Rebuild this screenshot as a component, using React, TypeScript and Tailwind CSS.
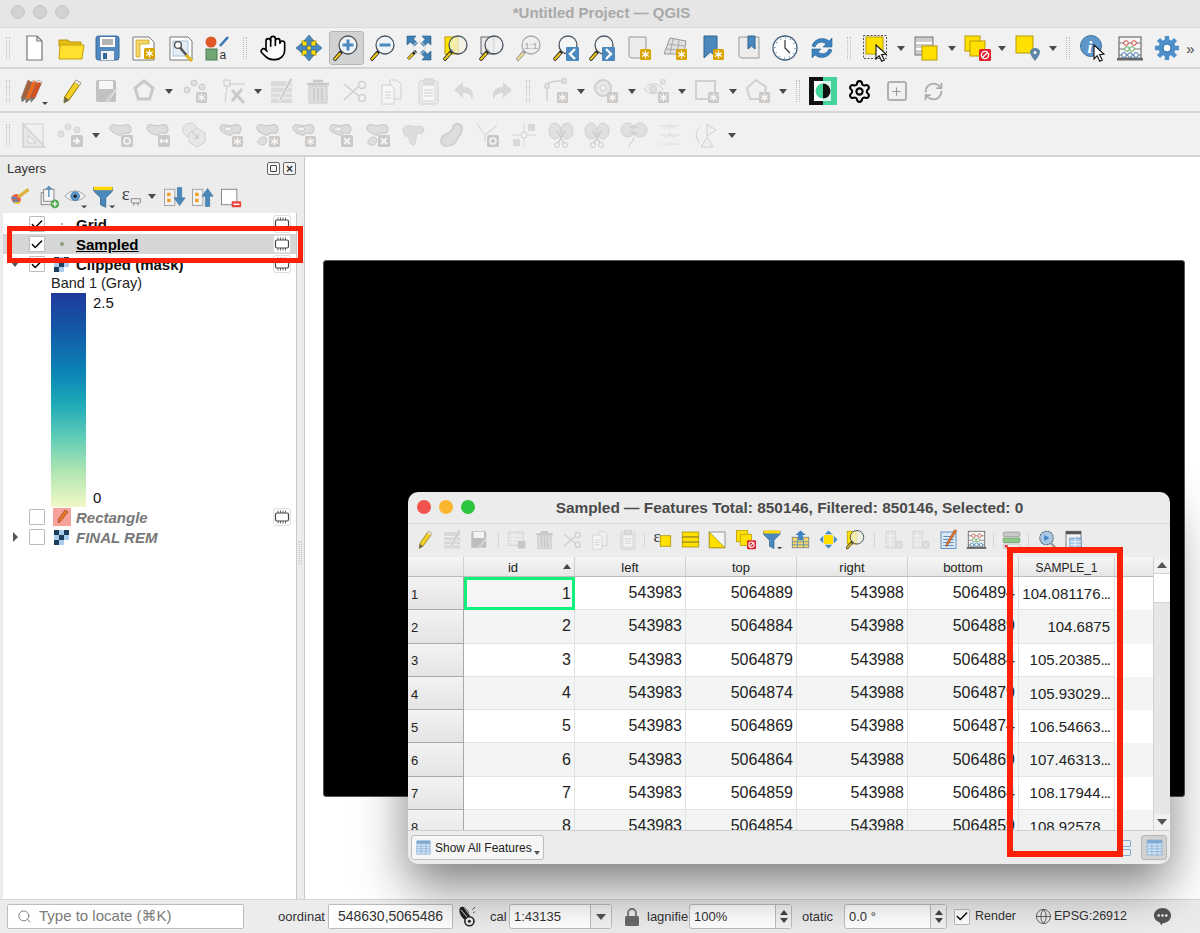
import type { ReactNode } from "react";
import { Hand, Search, Settings, RefreshCw, Check, Globe, Plus } from "lucide-react";

function Badge({ x = 15, y = 15, c = "#d9a300" }: { x?: number; y?: number; c?: string }) {
  const cx = x + 5.5;
  const cy = y + 5.5;
  return (
    <g>
      <rect x={x} y={y} width="11" height="11" rx="1.5" fill={c} />
      <path
        d={`M${cx} ${cy - 4}v8M${cx - 3.5} ${cy - 2}l7 4M${cx - 3.5} ${cy + 2}l7 -4`}
        stroke="#fff"
        strokeWidth="1.2"
      />
      <circle cx={cx} cy={cy} r="1.8" fill="#fff" />
    </g>
  );
}

function Mag({ cx = 16, cy = 11, fill = "#f4f6f6", children }: { cx?: number; cy?: number; fill?: string; children?: ReactNode }) {
  return (
    <g>
      <path d={`M${cx - 6} ${cy + 6}L${cx - 13} ${cy + 14}`} stroke="#222" strokeWidth="3.6" strokeLinecap="round" />
      <path d={`M${cx - 8} ${cy + 8.5}L${cx - 13} ${cy + 14}`} stroke="#f0c91a" strokeWidth="2" strokeLinecap="round" />
      <circle cx={cx} cy={cy} r="9" fill={fill} stroke="#4a5560" strokeWidth="1.3" />
      {children}
    </g>
  );
}

const blob = "M3 7c0-3 3-4 6-3s5 1 8 0 7 0 7 4-3 5-6 4-3 3-6 2-9-3-9-7z";

function Blob({ hole, badge, small }: { hole?: boolean; badge?: ReactNode; small?: boolean }) {
  return (
    <g>
      <path d={blob} fill="#c9c7c4" stroke="#999" strokeWidth="1.2" />
      {hole && <ellipse cx="11" cy="8" rx="4" ry="2.2" fill="#f2f2f2" stroke="#999" />}
      {small && <path d="M4 20c2-4 6-5 8-3s0 7-3 7-6-1-5-4z" fill="#c9c7c4" stroke="#999" />}
      {badge}
    </g>
  );
}

function GrayBox({ glyph }: { glyph: ReactNode }) {
  return (
    <g>
      <rect x="14" y="14" width="12" height="12" rx="1.5" fill="#9d9a96" />
      {glyph}
    </g>
  );
}

const cursor = <path d="M14 11l10 9-4.5.6 2.8 5.5-2.6 1.2-2.6-5.6L14 25z" fill="#fff" stroke="#111" strokeWidth="1.1" />;

const icons: Record<string, ReactNode> = {
  newDoc: <path d="M7 2h10l5 5v19H7zM17 2v5h5" fill="#fff" stroke="#777" strokeWidth="1.2" />,
  open: (
    <g>
      <path d="M2 6h9l2 2h11v4H2z" fill="#e5bd14" stroke="#b8960c" />
      <path d="M3 11h24l-2 14H2z" fill="#ffe02e" stroke="#c4a20e" />
    </g>
  ),
  save: (
    <g>
      <rect x="3" y="2" width="23" height="24" rx="2.5" fill="#5289bf" stroke="#33699c" />
      <rect x="7" y="3" width="15" height="10" fill="#fff" />
      <path d="M9 6h11M9 8h11M9 10h11" stroke="#666" />
      <rect x="8" y="17" width="13" height="9" fill="#f0f0f0" />
      <rect x="10" y="19" width="4" height="6" fill="#33699c" />
    </g>
  ),
  newLayout: (
    <g>
      <path d="M3 3h16l5 5v18H3z" fill="#fff" stroke="#777" />
      <path d="M6 6h13v4H10v13H6z" fill="#f3d56a" stroke="#c7a008" strokeWidth=".7" />
      <Badge x={14} y={14} />
    </g>
  ),
  layoutMgr: (
    <g>
      <path d="M3 3h18l4 4v19H3z" fill="#fff" stroke="#777" />
      <rect x="6" y="7" width="15" height="15" fill="#e4edf6" stroke="#a9c2da" />
      <path d="M10 9l5 7 7 8" stroke="#555" strokeWidth="2.6" />
      <path d="M19 21l6 6" stroke="#e0b92a" strokeWidth="3.4" />
      <circle cx="11" cy="11" r="3.4" fill="#fff" stroke="#555" strokeWidth="1.4" />
    </g>
  ),
  style: (
    <g>
      <circle cx="8" cy="8" r="5.5" fill="#e05a28" />
      <path d="M17 12L25 3" stroke="#3b76ad" strokeWidth="2.6" />
      <rect x="3" y="15" width="11" height="11" fill="#72a878" stroke="#4a7c50" />
      <text x="16.5" y="25" fontSize="12" fill="#333" fontFamily="Liberation Sans">a</text>
    </g>
  ),
  pan: (
    <g>
      <rect x="7" y="7" width="14" height="14" fill="#ffe000" stroke="#b79b00" />
      <path d="M14 1l5 6h-3v5h-4V7H9zM14 27l5-6h-3v-5h-4v5H9zM1 14l6-5v3h5v4H7v3zM27 14l-6-5v3h-5v4h5v3z" fill="#4a88bd" stroke="#2f658f" strokeWidth=".7" />
    </g>
  ),
  zoomIn: (
    <Mag fill="#f0f4f6">
      <path d="M16 5.5v11M10.500 11h11" stroke="#4a88bd" strokeWidth="3" />
    </Mag>
  ),
  zoomOut: (
    <Mag fill="#f0f4f6">
      <path d="M10.500 11h11" stroke="#4a88bd" strokeWidth="3" />
    </Mag>
  ),
  zoomFull: (
    <g>
      <path d="M2 2h9L8.500 5l4 4-3 3-4-4L2 11zM26 2v9l-3-2.500-4 4-3-3 4-4L17 2zM26 26h-9l2.500-3-4-4 3-3 4 4 3.500-3z" fill="#3e7fb4" stroke="#2a5d86" strokeWidth=".6" />
      <path d="M11 17L3 25" stroke="#222" strokeWidth="3" />
      <path d="M8 20L3 25" stroke="#f0c91a" strokeWidth="1.8" />
      <circle cx="14" cy="14" r="6" fill="none" stroke="#ddd" />
    </g>
  ),
  zoomSel: (
    <g>
      <rect x="3" y="3" width="13" height="17" fill="#ffe000" stroke="#b79b00" />
      <Mag fill="rgba(240,240,225,.75)" />
    </g>
  ),
  zoomLayer: (
    <g>
      <rect x="3" y="3" width="13" height="17" fill="#e8e8e8" stroke="#666" />
      <Mag fill="rgba(240,240,240,.75)" />
    </g>
  ),
  zoom11: (
    <Mag fill="#eee">
      <text x="9.500" y="14.500" fontSize="9" fill="#666" fontFamily="Liberation Sans" fontWeight="700">1:1</text>
    </Mag>
  ),
  zoomLast: (
    <g>
      <Mag />
      <rect x="14" y="13" width="13" height="14" rx="1" fill="#4a88bd" />
      <path d="M23 15l-5 5 5 5" fill="none" stroke="#fff" strokeWidth="2.4" />
    </g>
  ),
  zoomNext: (
    <g>
      <Mag />
      <rect x="14" y="13" width="13" height="14" rx="1" fill="#4a88bd" />
      <path d="M18 15l5 5-5 5" fill="none" stroke="#fff" strokeWidth="2.4" />
    </g>
  ),
  newMap: (
    <g>
      <path d="M4 3h17v21H8c-3 0-4-1-4-3z" fill="#ececec" stroke="#999" />
      <Badge />
    </g>
  ),
  map3d: (
    <g>
      <path d="M9 4l16 3-2 13-20 0z" fill="#e0e0e0" stroke="#999" />
      <path d="M6 10l18 2M4 15l19 1M12 5l-3 15M18 6l-2 14" stroke="#aaa" />
      <Badge />
    </g>
  ),
  bookmarkNew: (
    <g>
      <path d="M6 2h13v22l-6.500-6L6 24z" fill="#4a88bd" stroke="#2f658f" />
      <Badge />
    </g>
  ),
  bookmarks: (
    <g>
      <path d="M4 3h20v21H8c-3 0-4-1-4-3z" fill="#ececec" stroke="#999" />
      <path d="M13 2h7v13l-3.500-3L13 15z" fill="#4a88bd" stroke="#2f658f" />
    </g>
  ),
  clock: (
    <g>
      <circle cx="14" cy="14" r="12" fill="#fff" stroke="#45607a" strokeWidth="1.3" />
      <circle cx="14" cy="14" r="10" fill="none" stroke="#5d93c5" strokeWidth="1.4" strokeDasharray="1 4.2" />
      <path d="M14 6v8l5 5" fill="none" stroke="#333" strokeWidth="1.2" />
    </g>
  ),
  refresh: (
    <g>
      <path d="M4 12C6 5 15 2 21 7l3-3v9h-9l3-3C14 7 9 8 7 13z" fill="#3e83c1" stroke="#2a628f" strokeWidth=".6" />
      <path d="M24 16C22 23 13 26 7 21l-3 3v-9h9l-3 3c4 3 9 2 11-3z" fill="#3e83c1" stroke="#2a628f" strokeWidth=".6" />
    </g>
  ),
  select: (
    <g>
      <rect x="1.500" y="1.500" width="23" height="23" fill="#eee" stroke="#555" strokeDasharray="2 1.500" />
      <rect x="4" y="3" width="17" height="17" fill="#ffe000" stroke="#b79b00" />
      {cursor}
    </g>
  ),
  attrSelect: (
    <g>
      <rect x="3" y="3" width="18" height="18" fill="#ccc" stroke="#777" />
      <path d="M4 9h16M4 15h16" stroke="#fff" strokeWidth="2" />
      <rect x="10" y="12" width="15" height="14" fill="#ffe000" stroke="#b79b00" />
    </g>
  ),
  deselect: (
    <g>
      <rect x="2" y="2" width="15" height="15" fill="#ffe000" stroke="#b79b00" />
      <rect x="7" y="7" width="15" height="15" fill="#ffe000" stroke="#b79b00" />
      <rect x="16" y="15" width="12" height="12" rx="1.500" fill="#e2202c" />
      <circle cx="22" cy="21" r="3.600" fill="none" stroke="#fff" strokeWidth="1.400" />
      <path d="M19.500 23.500l5-5" stroke="#fff" strokeWidth="1.400" />
    </g>
  ),
  selectLoc: (
    <g>
      <rect x="2" y="2" width="17" height="17" fill="#ffe000" stroke="#b79b00" />
      <path d="M21 14c3 0 5 2 5 4 0 3-5 9-5 9s-5-6-5-9c0-2 2-4 5-4z" fill="#5f84a6" />
      <circle cx="21" cy="18.500" r="1.500" fill="#fff" />
    </g>
  ),
  identify: (
    <g>
      <circle cx="11" cy="12" r="10.500" fill="#5f97cb" stroke="#3f74a6" />
      <text x="7.500" y="19" fontSize="17" fontStyle="italic" fontWeight="700" fill="#fff" fontFamily="Liberation Serif">i</text>
      {cursor}
    </g>
  ),
  stats: (
    <g>
      <rect x="3" y="3" width="22" height="21" fill="#f6f6f6" stroke="#555" />
      <path d="M3 9h22M3 15h22M3 21h22" stroke="#777" />
      <circle cx="10" cy="9" r="2.300" fill="#fff" stroke="#cf3a34" />
      <circle cx="18" cy="9" r="2.300" fill="#fff" stroke="#cf3a34" />
      <circle cx="11" cy="15" r="2.300" fill="#fff" stroke="#54a44c" />
      <circle cx="16" cy="15" r="2.300" fill="#fff" stroke="#54a44c" />
      <circle cx="8" cy="21" r="2.300" fill="#fff" stroke="#3b76ad" />
      <circle cx="14" cy="21" r="2.300" fill="#fff" stroke="#3b76ad" />
      <circle cx="20" cy="21" r="2.300" fill="#fff" stroke="#3b76ad" />
      <rect x="1" y="24" width="26" height="2.500" fill="#666" />
    </g>
  ),
  gearBlue: (
    <g>
      <path d="M14 2v24M2 14h24M5.500 5.500l17 17M22.500 5.500l-17 17" stroke="#4f8fc9" strokeWidth="4.500" />
      <circle cx="14" cy="14" r="8.500" fill="#4f8fc9" />
      <circle cx="14" cy="14" r="4" fill="#fff" stroke="#2f6da3" />
    </g>
  ),
  pencils: (
    <g>
      <path d="M8 3l4 2-6 16-4 4-.5-5z" fill="#a8623c" stroke="#666" strokeWidth=".5" />
      <path d="M13 3l4 2-7 17-4 4-.5-5z" fill="#ee6a1c" stroke="#666" strokeWidth=".5" />
      <path d="M18 3l4 2-7 16-4 4-.5-5z" fill="#d5501e" stroke="#666" strokeWidth=".5" />
      <path d="M1.500 20l4.500 1-4 4zM6 21.500l4.500.5-4 4zM10.500 20l4.500 1-4 4z" fill="#777" />
      <path d="M8 3l4 2 1-2 4 2 1-2 4 2-.6 1.400L19 5l-1 1-4-2-1 1-4-2z" fill="#e6e6e6" />
      <path d="M22 25h6l-3 3z" fill="#444" />
    </g>
  ),
  pencil: (
    <g>
      <path d="M19 3l5 3-12 17-5 3 .5-6z" fill="#f1cf25" stroke="#8f7a10" />
      <path d="M19 3l5 3-1.500 2.200-5-3z" fill="#eee" stroke="#999" strokeWidth=".5" />
      <path d="M8 20l4 3-5 3z" fill="#666" />
    </g>
  ),
  saveEdit: (
    <g>
      <rect x="3" y="3" width="20" height="22" rx="2" fill="#888" />
      <rect x="6" y="4" width="14" height="8" fill="#fff" />
      <path d="M25 10L15 25l-2 1 .5-3z" fill="#888" stroke="#ddd" />
    </g>
  ),
  poly: <path d="M14 4l9 7-3.500 11h-11L5 11z" fill="#f2f2f2" stroke="#999" strokeWidth="3" />,
  pointsBadge: (
    <g>
      <circle cx="6" cy="13" r="3" fill="#ccc" stroke="#999" />
      <circle cx="13" cy="6" r="3" fill="#ccc" stroke="#999" />
      <circle cx="21" cy="10" r="3" fill="#ccc" stroke="#999" />
      <Badge c="#a19a93" />
    </g>
  ),
  toolX: (
    <g>
      <path d="M4 3h6v6H4z" fill="none" stroke="#999" />
      <path d="M7 9L5 25M9 7l16 0" stroke="#999" />
      <path d="M12 13l12 13M22 12L12 24" stroke="#9d9a96" strokeWidth="3" />
    </g>
  ),
  tableEdit: (
    <g>
      <rect x="3" y="4" width="21" height="22" fill="#c2bfba" />
      <path d="M3 10h21M3 16h21M3 21h21" stroke="#fff" strokeWidth="1.200" />
      <path d="M25 2L14 22l-3 3 .5-4L22 1z" fill="#999" stroke="#eee" />
    </g>
  ),
  trash: (
    <g>
      <path d="M3 7h22M9 4h10" stroke="#999" strokeWidth="2.500" />
      <path d="M5 9h18v17H5z" fill="#c9c6c2" stroke="#999" />
      <path d="M10 11v13M14 11v13M18 11v13" stroke="#999" strokeWidth="1.500" />
    </g>
  ),
  scissors: (
    <g>
      <path d="M3 7l15 12M3 23L18 9" stroke="#aaa" strokeWidth="1.600" />
      <circle cx="21" cy="8" r="3.500" fill="none" stroke="#aaa" strokeWidth="1.500" />
      <circle cx="21" cy="21" r="3.500" fill="none" stroke="#aaa" strokeWidth="1.500" />
    </g>
  ),
  copy: (
    <g>
      <path d="M13 3h7l4 4v15H13z" fill="#f2f2f2" stroke="#aaa" />
      <path d="M5 8h9l3 3v16H5z" fill="#fff" stroke="#aaa" />
      <path d="M8 15h6M8 18h6M8 21h6" stroke="#aaa" />
    </g>
  ),
  paste: (
    <g>
      <rect x="5" y="4" width="19" height="23" rx="1.500" fill="#e4e4e4" stroke="#aaa" />
      <rect x="8" y="8" width="13" height="16" fill="#fff" stroke="#bbb" />
      <rect x="10" y="2" width="9" height="5" fill="#ccc" stroke="#aaa" />
      <path d="M10 13h9M10 16h9M10 19h9" stroke="#aaa" />
    </g>
  ),
  undo: <path d="M12 5L3 13l9 8v-5c6 0 8 2 9 7 3-8-1-13-9-13z" fill="#bdbab7" />,
  redo: <path d="M16 5l9 8-9 8v-5c-6 0-8 2-9 7-3-8 1-13 9-13z" fill="#bdbab7" />,
  node1: (
    <g>
      <path d="M5 24V9c0-4 5-5 16-5" fill="none" stroke="#aaa" strokeWidth="1.400" />
      <rect x="3" y="7" width="4" height="4" fill="#ddd" stroke="#999" />
      <rect x="20" y="2" width="4" height="4" fill="#ddd" stroke="#999" />
      <Badge c="#a19a93" />
    </g>
  ),
  ring: (
    <g>
      <circle cx="11" cy="11" r="8" fill="#ddd" stroke="#aaa" strokeWidth="2" />
      <circle cx="11" cy="11" r="3" fill="#f2f2f2" stroke="#aaa" />
      <Badge c="#a19a93" />
    </g>
  ),
  eye: (
    <g>
      <path d="M1 12c5-7 14-7 19 0-5 6-14 6-19 0z" fill="#eee" stroke="#aaa" />
      <circle cx="10" cy="12" r="3.500" fill="#ccc" stroke="#aaa" />
      <rect x="18" y="3" width="4" height="4" fill="#ddd" stroke="#aaa" />
      <Badge c="#a19a93" />
    </g>
  ),
  rectNode: (
    <g>
      <rect x="3" y="4" width="19" height="18" fill="none" stroke="#aaa" strokeWidth="2" />
      <Badge c="#a19a93" />
    </g>
  ),
  polyNode: (
    <g>
      <path d="M12 3l10 7-2 12H6L3 11z" fill="none" stroke="#aaa" strokeWidth="2" />
      <Badge c="#a19a93" />
    </g>
  ),
  plugin: (
    <g>
      <rect x="14" y="0" width="14" height="28" fill="#45d49b" />
      <rect x="0" y="0" width="14" height="28" fill="#111" />
      <rect x="5" y="4" width="9" height="20" fill="#fff" />
      <rect x="14" y="4" width="8" height="20" fill="#d9f6ea" />
      <path d="M14 6.500a7.500 7.500 0 0 0 0 15z" fill="#45d49b" />
      <path d="M14 6.500a7.500 7.500 0 0 1 0 15z" fill="#111" />
    </g>
  ),
  ruler: (
    <g>
      <path d="M3 3l22 23H3z" fill="#ddd" stroke="#aaa" strokeWidth="1.400" />
      <path d="M3 3h20v23" fill="none" stroke="#aaa" />
      <path d="M8 14l8 8H8z" fill="#f2f2f2" stroke="#aaa" />
    </g>
  ),
  pointsMove: (
    <g>
      <circle cx="4" cy="13" r="3" fill="#ccc" stroke="#aaa" />
      <circle cx="11" cy="6" r="3" fill="#ccc" stroke="#aaa" />
      <circle cx="20" cy="9" r="3" fill="#ccc" stroke="#aaa" />
      <GrayBox glyph={<path d="M16 20h6M19 17l3 3-3 3" stroke="#fff" strokeWidth="1.800" fill="none" />} />
    </g>
  ),
  shapeRot: <Blob badge={<GrayBox glyph={<circle cx="20" cy="20" r="3" fill="none" stroke="#fff" strokeWidth="1.500" />} />} />,
  shapeArrow: <Blob badge={<GrayBox glyph={<path d="M16 20h8M18 18l-2 2 2 2M22 18l2 2-2 2" fill="none" stroke="#fff" strokeWidth="1.300" />} />} />,
  hexArrow: (
    <g>
      <circle cx="9" cy="9" r="7" fill="#ddd" stroke="#aaa" />
      <path d="M16 7l8 5v9l-8 5-8-5v-9z" fill="#ddd" stroke="#aaa" />
      <path d="M10 10l7 7M17 13v4h-4" stroke="#888" fill="none" />
    </g>
  ),
  shapeHole: <Blob hole badge={<Badge c="#a19a93" />} />,
  shapePart: <Blob small badge={<Badge c="#a19a93" />} />,
  shapeHoleDel: <Blob hole badge={<GrayBox glyph={<path d="M17 17l6 6M23 17l-6 6" stroke="#fff" strokeWidth="1.800" />} />} />,
  shapePartDel: <Blob small badge={<GrayBox glyph={<path d="M17 17l6 6M23 17l-6 6" stroke="#fff" strokeWidth="1.800" />} />} />,
  shapeReshape: <path d="M3 9c0-4 5-5 9-4s9-1 11 2 0 6-5 5c-3 0-1 12-5 12s-3-9-6-9-4-3-4-6z" fill="#c9c7c4" stroke="#aaa" />,
  shapeOffset: <path d="M4 20C4 12 14 14 16 7s9-4 9 1-4 7-6 12-15 8-15 0z" fill="#c9c7c4" stroke="#aaa" strokeWidth="2" />,
  vertex: (
    <g>
      <path d="M4 3l8 11 12-10M12 14v7" fill="none" stroke="#bbb" strokeWidth="1.200" />
      <GrayBox glyph={<circle cx="20" cy="20" r="3" fill="none" stroke="#fff" strokeWidth="1.400" />} />
    </g>
  ),
  snap: (
    <g>
      <path d="M14 2v24M2 14h24" stroke="#bbb" />
      <circle cx="14" cy="14" r="3" fill="#eee" stroke="#aaa" />
      <rect x="18" y="3" width="7" height="7" fill="#bbb" />
      <rect x="3" y="18" width="7" height="7" fill="#bbb" />
    </g>
  ),
  cutShape: (
    <g>
      <ellipse cx="8" cy="10" rx="6" ry="8" fill="#ccc" stroke="#aaa" />
      <ellipse cx="20" cy="10" rx="6" ry="8" fill="#ccc" stroke="#aaa" />
      <path d="M10 10l7 12M18 10l-7 12" stroke="#999" strokeWidth="1.400" />
      <circle cx="10" cy="24" r="2.500" fill="none" stroke="#999" />
      <circle cx="18" cy="24" r="2.500" fill="none" stroke="#999" />
    </g>
  ),
  merge: (
    <g>
      <ellipse cx="8" cy="9" rx="7" ry="7" fill="#ccc" stroke="#aaa" />
      <ellipse cx="20" cy="9" rx="7" ry="7" fill="#ccc" stroke="#aaa" />
      <path d="M10 6h8M10 12h8M14 16c-1 5-5 7-5 10" stroke="#999" fill="none" />
    </g>
  ),
  lines3: <path d="M4 5h20M4 14h20M4 23h20M14 2v6M14 11v6M14 20v6M8 8c3-3 9-3 12 0M8 17c3-3 9-3 12 0" stroke="#ccc" fill="none" />,
  rotateFlag: (
    <g>
      <path d="M14 3v12l9-6zM14 16l6 10H8z" fill="#eee" stroke="#aaa" />
      <path d="M7 6c-5 5-5 11 0 16" fill="none" stroke="#aaa" />
    </g>
  ),
  brush: (
    <g>
      <path d="M4 14c3-5 8-4 10-1s1 8-2 9-9-3-8-8z" fill="#e8604b" />
      <path d="M4 16c2-2 5-1 6 1M6 20c2-2 5-2 6 0" stroke="#4a88bd" strokeWidth="2" fill="none" />
      <path d="M12 14L24 5" stroke="#e0b040" strokeWidth="4" />
      <path d="M8 20c2 1 4 2 6 0" stroke="#f1cf25" strokeWidth="2" fill="none" />
    </g>
  ),
  addGroup: (
    <g>
      <rect x="6" y="9" width="14" height="14" fill="#eee" stroke="#777" />
      <rect x="9" y="5" width="12" height="14" fill="#f6f6f6" stroke="#777" />
      <path d="M15 2v12M12 5l3-3 3 3" stroke="#4a88bd" strokeWidth="1.500" fill="none" />
      <circle cx="22" cy="22" r="5" fill="#50a850" />
      <path d="M22 19v6M19 22h6" stroke="#fff" strokeWidth="1.500" />
    </g>
  ),
  eyeBlue: (
    <g>
      <path d="M1 13c6-8 18-8 24 0-6 7-18 7-24 0z" fill="#eee" stroke="#999" />
      <circle cx="13" cy="13" r="5" fill="#5a9ad0" stroke="#3f74a6" />
      <circle cx="13" cy="13" r="2" fill="#222" />
      <path d="M20 24h7l-3.500 3z" fill="#444" />
    </g>
  ),
  filter: (
    <g>
      <path d="M2 3h22v4l-8 8v11l-6-3v-8L2 7z" fill="#4a88bd" stroke="#2f658f" />
      <rect x="2" y="2" width="22" height="4" fill="#ffd800" />
      <path d="M20 24h7l-3.500 3z" fill="#444" />
    </g>
  ),
  epsilonMem: (
    <g>
      <text x="2" y="17" fontSize="22" fill="#444" fontFamily="Liberation Serif">ε</text>
      <path d="M13 16h11v3a2 2 0 0 1-2 2H15a2 2 0 0 1-2-2z M16 21v3M21 21v3" fill="none" stroke="#777" />
    </g>
  ),
  expand: (
    <g>
      <rect x="3" y="5" width="12" height="19" fill="#f2f2f2" stroke="#999" />
      <rect x="6" y="9" width="4" height="4" fill="#f39c28" />
      <rect x="6" y="16" width="4" height="4" fill="#f39c28" />
      <path d="M18 3h5v12h4l-6.500 9L14 15h4z" fill="#4a88bd" stroke="#2f658f" strokeWidth=".6" />
    </g>
  ),
  collapse: (
    <g>
      <rect x="3" y="5" width="12" height="19" fill="#f2f2f2" stroke="#999" />
      <rect x="6" y="9" width="4" height="4" fill="#f39c28" />
      <rect x="6" y="16" width="4" height="4" fill="#f39c28" />
      <path d="M18 25h5V13h4l-6.500-9L14 13h4z" fill="#4a88bd" stroke="#2f658f" strokeWidth=".6" />
    </g>
  ),
  removeLayer: (
    <g>
      <rect x="4" y="5" width="18" height="18" fill="#fff" stroke="#777" />
      <rect x="16" y="19" width="11" height="7" rx="1" fill="#e8443c" />
      <path d="M18 22.500h7" stroke="#fff" strokeWidth="1.600" />
    </g>
  ),
  epsSelect: (
    <g>
      <rect x="11" y="9" width="14" height="14" fill="#ffe000" stroke="#a38b00" />
      <text x="2" y="17" fontSize="22" fill="#333" fontFamily="Liberation Serif">ε</text>
    </g>
  ),
  selectAll: (
    <g>
      <rect x="3" y="4" width="22" height="6" fill="#ffe000" stroke="#a38b00" />
      <rect x="3" y="11" width="22" height="6" fill="#ffe000" stroke="#a38b00" />
      <rect x="3" y="18" width="22" height="6" fill="#ffe000" stroke="#a38b00" />
    </g>
  ),
  invert: (
    <g>
      <rect x="3" y="4" width="21" height="21" fill="#f6f6f6" stroke="#777" />
      <path d="M3 4l21 21H3z" fill="#ffe000" stroke="#a38b00" />
    </g>
  ),
  moveTop: (
    <g>
      <rect x="3" y="11" width="22" height="14" fill="#f3d56a" stroke="#777" />
      <path d="M3 17h22M3 21h22M10 11v14M18 11v14" stroke="#4a88bd" />
      <path d="M11 15V8H7l7-6 7 6h-4v7z" fill="#3e83c1" />
    </g>
  ),
  panSel: (
    <g>
      <rect x="8" y="8" width="12" height="12" fill="#ffe000" />
      <path d="M14 2l5 5H9zM14 26l5-5H9zM2 14l5-5v10zM26 14l-5-5v10z" fill="#4a88bd" />
    </g>
  ),
  tableNew: (
    <g>
      <rect x="3" y="4" width="20" height="18" fill="#ddd" stroke="#aaa" />
      <path d="M3 9h20M3 14h20M3 18h20M10 4v18" stroke="#fff" />
      <rect x="16" y="16" width="10" height="10" fill="#a19a93" />
    </g>
  ),
  tableX: (
    <g>
      <rect x="4" y="3" width="13" height="22" fill="#ddd" stroke="#aaa" />
      <path d="M4 9h13M4 15h13M4 20h13M10 3v22" stroke="#fff" />
      <rect x="16" y="16" width="10" height="10" fill="#bbb" />
      <path d="M18 18l6 6M24 18l-6 6" stroke="#fff" />
    </g>
  ),
  fieldCalc: (
    <g>
      <rect x="4" y="4" width="20" height="22" fill="#dbe8f4" stroke="#3b76ad" />
      <path d="M7 10h14M7 14h14M7 18h14M7 22h14" stroke="#3b76ad" />
      <path d="M25 2L14 20l-3 4 .5-5L22 1z" fill="#e8742a" stroke="#7a3c14" strokeWidth=".6" />
    </g>
  ),
  conditional: (
    <g>
      <rect x="3" y="4" width="22" height="6" rx="1" fill="#c9c9c9" stroke="#999" />
      <rect x="3" y="12" width="22" height="6" rx="1" fill="#8ecb8a" stroke="#689a64" />
      <rect x="3" y="20" width="22" height="6" rx="1" fill="#eee" stroke="#bbb" />
      <path d="M5 23h4" stroke="#e2202c" strokeWidth="3" />
    </g>
  ),
  actions: (
    <g>
      <path d="M14 3a9 9 0 1 0 0 18 9 9 0 0 0 0-18z" fill="#a9c9e6" stroke="#5f6f7f" strokeWidth="1.500" strokeDasharray="3 1" />
      <path d="M11 8l7 4-7 4z" fill="#3e83c1" />
      <path d="M20 19l6 6" stroke="#999" strokeWidth="3" />
    </g>
  ),
  dockTable: (
    <g>
      <rect x="4" y="3" width="20" height="22" fill="#f3f3f3" stroke="#555" />
      <rect x="4" y="3" width="20" height="4" fill="#555" />
      <rect x="9" y="12" width="15" height="13" fill="#a9cbe8" stroke="#5f8fbb" />
      <path d="M9 17h15M9 21h15M16 12v13" stroke="#fff" />
    </g>
  ),
  table: (
    <g>
      <rect x="3" y="3" width="22" height="22" fill="#cfe2f3" stroke="#7eaad2" />
      <rect x="3" y="3" width="22" height="5" fill="#7eaad2" />
      <path d="M3 12h22M3 16h22M3 20h22M10 8v17M18 8v17" stroke="#7eaad2" />
    </g>
  ),
};

function Icon({ k, size = 28, className = "" }: { k: string; size?: number; className?: string }) {
  return (
    <svg viewBox="0 0 28 28" width={size} height={size} className={className}>
      {icons[k]}
    </svg>
  );
}

function T({ k, dim, active }: { k: string; dim?: boolean; active?: boolean }) {
  return (
    <div className="flex w-[36.6px] shrink-0 items-center justify-center">
      <div className={active ? "flex h-[34px] w-[35px] items-center justify-center rounded-[3px] border border-[#b6b6b6] bg-[#d2d2d2]" : "flex"}>
        <Icon k={k} className={dim ? "opacity-[.45]" : ""} />
      </div>
    </div>
  );
}

function A({ k, dim }: { k: string; dim?: boolean }) {
  return (
    <div className="flex w-[27.6px] shrink-0 items-center justify-center">
      <Icon k={k} size={21} className={dim ? "opacity-[.45]" : ""} />
    </div>
  );
}

function L({ k }: { k: string }) {
  return (
    <div className="flex w-[28px] shrink-0 items-center justify-center">
      <Icon k={k} size={24} />
    </div>
  );
}

function Dd({ className = "w-[14px]" }: { className?: string }) {
  return (
    <div className={`flex shrink-0 items-center justify-center ${className}`}>
      <div className="h-0 w-0 border-x-[4.5px] border-t-[5px] border-x-transparent border-t-[#4a4a4a]" />
    </div>
  );
}

function Grip({ className }: { className: string }) {
  return (
    <div className={`flex shrink-0 justify-center ${className}`}>
      <div className="h-[22px] w-[4px] border-x border-dotted border-[#bdbdbd]" />
    </div>
  );
}

function ASep({ className }: { className: string }) {
  return (
    <div className={`flex shrink-0 justify-center ${className}`}>
      <div className="h-[14px] w-px bg-[#d4d4d4]" />
    </div>
  );
}

function Memory() {
  return (
    <div className="ml-auto mr-[5px] flex h-[18px] w-[18px] items-center justify-center rounded-[3px] border border-[#dedede] bg-white">
      <svg viewBox="0 0 16 16" width="16" height="16">
        <rect x="1.500" y="4" width="13" height="8" rx="1.500" fill="none" stroke="#444" strokeWidth="1.200" />
        <path d="M4 1.500v2.500M6.500 1.500v2.500M9 1.500v2.500M11.500 1.500v2.500M4 12v2.500M6.500 12v2.500M9 12v2.500M11.500 12v2.500" stroke="#555" strokeWidth=".9" />
      </svg>
    </div>
  );
}

function Box({ checked }: { checked?: boolean }) {
  return (
    <div className="flex h-[16px] w-[16px] shrink-0 items-center justify-center rounded-[1px] border border-[#bcbcbc] bg-white">
      {checked && <Check size={15} strokeWidth={2.4} className="text-black" />}
    </div>
  );
}

function Raster() {
  return (
    <svg viewBox="0 0 3 3" width="15" height="15" shapeRendering="crispEdges">
      <path d="M1 0h1v1H1zM0 1h1v1H0zM2 1h1v1H2zM1 2h1v1H1z" fill="#a9cdec" />
      <path d="M0 0h1v1H0zM2 0h1v1H2zM1 1h1v1H1zM0 2h1v1H0z" fill="#1f3e5a" />
    </svg>
  );
}

function Row({ arrow, checked, symbol, name, nameClass, mem, rowClass = "" }: {
  arrow?: "down" | "right";
  checked?: boolean;
  symbol: ReactNode;
  name: string;
  nameClass: string;
  mem?: boolean;
  rowClass?: string;
}) {
  return (
    <div className={`flex h-[20px] items-center ${rowClass}`}>
      <div className="flex w-[26px] shrink-0 justify-center pr-[2px]">
        {arrow === "down" && <div className="h-0 w-0 border-x-[4px] border-t-[5px] border-x-transparent border-t-[#555]" />}
        {arrow === "right" && <div className="h-0 w-0 border-y-[5px] border-l-[5px] border-y-transparent border-l-[#555]" />}
      </div>
      <Box checked={checked} />
      <div className="flex w-[31px] shrink-0 justify-center pl-[2px]">{symbol}</div>
      <span className={`text-[15px] font-bold leading-none ${nameClass}`}>{name}</span>
      {mem && <Memory />}
    </div>
  );
}

function LayersPanel() {
  return (
    <div className="flex w-[294px] shrink-0 flex-col">
      <div className="flex h-[23px] shrink-0 items-center pl-[4px] pr-[1px] text-[13px] text-[#333]">
        <span>Layers</span>
        <div className="ml-auto flex gap-[3px]">
          <div className="flex h-[13px] w-[13px] items-center justify-center rounded-[2px] border border-[#666] bg-[#f4f4f4]">
            <div className="h-[7px] w-[7px] rounded-[1px] border border-[#444]" />
          </div>
          <div className="flex h-[13px] w-[13px] items-center justify-center rounded-[2px] border border-[#666] bg-[#f4f4f4] text-[12px] font-bold leading-none text-[#333]">×</div>
        </div>
      </div>
      <div className="flex h-[33px] shrink-0 items-center pl-[3px]">
        <L k="brush" />
        <L k="addGroup" />
        <L k="eyeBlue" />
        <L k="filter" />
        <L k="epsilonMem" />
        <Dd className="w-[11px]" />
        <div className="w-[3px] shrink-0" />
        <L k="expand" />
        <L k="collapse" />
        <L k="removeLayer" />
      </div>
      <div className="flex-1 border-r border-[#c9c9c9] bg-white pt-[1px]">
        <Row checked symbol={<div className="h-[2px] w-[2px] rounded-full bg-[#999]" />} name="Grid" nameClass="text-[#111]" mem />
        <Row checked symbol={<div className="h-[4px] w-[4px] rounded-full bg-[#8a9a80]" />} name="Sampled" nameClass="text-black underline" mem rowClass="bg-[#d6d6d6]" />
        <Row arrow="down" checked symbol={<Raster />} name="Clipped (mask)" nameClass="text-[#111]" mem />
        <div className="flex h-[19px] items-center pl-[48px] text-[14.5px] leading-none text-[#222]">Band 1 (Gray)</div>
        <div className="flex h-[214px] pl-[48px]">
          <div className="w-[35px] bg-[linear-gradient(180deg,#1f3a9c_0%,#125aa8_18%,#0b86b6_38%,#1eaab8_52%,#63cdb6_68%,#b2e6b2_84%,#f1f8c6_100%)]" />
          <div className="flex flex-col justify-between pl-[7px] pt-[1px] text-[15px] leading-[18px] text-[#111]">
            <span>2.5</span>
            <span>0</span>
          </div>
        </div>
        <Row
          symbol={
            <div className="flex h-[18px] w-[18px] items-center justify-center bg-[#f7a29a]">
              <svg viewBox="0 0 16 16" width="16" height="16">
                <path d="M11 1l3 2-7 9-3 2 .5-4z" fill="#e8742a" stroke="#8a4314" strokeWidth=".6" />
              </svg>
            </div>
          }
          name="Rectangle"
          nameClass="italic text-[#777]"
          mem
        />
        <Row arrow="right" symbol={<Raster />} name="FINAL REM" nameClass="italic text-[#777]" />
      </div>
    </div>
  );
}

const rows = [
  { id: 1, top: 5064889, bottom: "5064894", sample: "104.081176", cut: true },
  { id: 2, top: 5064884, bottom: "5064889", sample: "104.6875", cut: false },
  { id: 3, top: 5064879, bottom: "5064884", sample: "105.20385", cut: true },
  { id: 4, top: 5064874, bottom: "5064879", sample: "105.93029", cut: true },
  { id: 5, top: 5064869, bottom: "5064874", sample: "106.54663", cut: true },
  { id: 6, top: 5064864, bottom: "5064869", sample: "107.46313", cut: true },
  { id: 7, top: 5064859, bottom: "5064864", sample: "108.17944", cut: true },
  { id: 8, top: 5064854, bottom: "5064859", sample: "108.92578", cut: true },
];

const colClass = "grid grid-cols-[56px_111px_111px_111px_111px_111px_96px]";

function HeadCell({ children, sort }: { children?: ReactNode; sort?: boolean }) {
  return (
    <div className={`relative flex items-center justify-center border-r border-[#cfcfcf] pt-[2px] text-[13px] leading-none text-[#222] ${sort ? "pr-[12px]" : ""}`}>
      {children}
      {sort && <div className="absolute right-[3px] top-[7px] h-0 w-0 border-x-[4.5px] border-b-[5px] border-x-transparent border-b-[#444]" />}
    </div>
  );
}

function Cell({ children, focus }: { children: ReactNode; focus?: boolean }) {
  return (
    <div className={`flex items-center justify-end overflow-visible whitespace-nowrap text-[16px] leading-none text-[#222] ${focus ? "border-[3px] border-[#12f07c] bg-[#f3f6f4] pr-[1px]" : "border-b border-r border-[#e2e2e2] pr-[3px]"}`}>
      {children}
    </div>
  );
}

function AttributeWindow() {
  return (
    <div className="absolute left-[408px] top-[492px] flex h-[372px] w-[762px] flex-col overflow-hidden rounded-[10px] bg-[#ececec] shadow-[0_22px_50px_rgba(0,0,0,0.5)]">
      <div className="relative flex h-[32px] shrink-0 items-center justify-center border-b border-[#d8d8d8] text-[15.400px] font-bold text-[#4a4a4a]">
        <div className="absolute left-[9px] top-[8px] flex gap-[8px]">
          <div className="h-[14px] w-[14px] rounded-full bg-[#f0544c]" />
          <div className="h-[14px] w-[14px] rounded-full bg-[#fbb62e]" />
          <div className="h-[14px] w-[14px] rounded-full bg-[#2cc540]" />
        </div>
        <span className="pl-[1px]">Sampled — Features Total: 850146, Filtered: 850146, Selected: 0</span>
      </div>
      <div className="flex h-[33px] shrink-0 items-center pb-[2px] pl-[3px]">
        <A k="pencil" />
        <A k="tableEdit" dim />
        <A k="saveEdit" dim />
        <ASep className="w-[9.400px]" />
        <A k="tableNew" dim />
        <A k="trash" dim />
        <A k="scissors" dim />
        <A k="copy" dim />
        <A k="paste" dim />
        <ASep className="w-[7.600px]" />
        <A k="epsSelect" />
        <A k="selectAll" />
        <A k="invert" />
        <A k="deselect" />
        <A k="filter" />
        <A k="moveTop" />
        <A k="panSel" />
        <A k="zoomSel" />
        <ASep className="w-[10px]" />
        <A k="tableX" dim />
        <A k="tableX" dim />
        <A k="fieldCalc" />
        <A k="stats" />
        <ASep className="w-[7.600px]" />
        <A k="conditional" />
        <ASep className="w-[7.400px]" />
        <A k="actions" />
        <A k="dockTable" />
      </div>
      <div className="flex h-[274px] shrink-0 overflow-hidden border-b border-[#cfcfcf] bg-[#f1f1f1]">
        <div className="w-[745px] shrink-0 overflow-hidden">
          <div className={`${colClass} h-[20px] border-b border-[#bdbdbd] bg-[linear-gradient(180deg,#f6f6f6,#e6e6e6)]`}>
            <HeadCell />
            <HeadCell sort>id</HeadCell>
            <HeadCell>left</HeadCell>
            <HeadCell>top</HeadCell>
            <HeadCell>right</HeadCell>
            <HeadCell>bottom</HeadCell>
            <HeadCell><span className="text-[12px]">SAMPLE_1</span></HeadCell>
          </div>
          {rows.map((r, i) => (
            <div key={r.id} className={`${colClass} h-[33.300px] ${i % 2 === 0 ? "bg-white" : "bg-[#f3f5f4]"}`}>
              <div className="flex items-center border-b border-r border-[#a9a9a9] bg-[linear-gradient(180deg,#f3f3f3,#e4e4e4)] pl-[3px] pt-[2px] text-[13px] leading-none text-[#222]">{r.id}</div>
              <Cell focus={r.id === 1}>{r.id}</Cell>
              <Cell>543983</Cell>
              <Cell>{r.top}</Cell>
              <Cell>543988</Cell>
              <Cell>{r.bottom}</Cell>
              <div className="flex items-center justify-end whitespace-nowrap border-b border-r border-[#e2e2e2] pr-[4px] text-[15px] leading-none text-[#222]">
                {r.sample}
                {r.cut && <span className="tracking-[-1px]">...</span>}
              </div>
            </div>
          ))}
        </div>
        <div className="flex w-[17px] shrink-0 flex-col border-l border-[#d0d0d0] bg-[#e6e6e6]">
          <div className="flex h-[16px] items-center justify-center bg-[#f1f1f1]">
            <div className="h-0 w-0 border-x-[5px] border-b-[6px] border-x-transparent border-b-[#555]" />
          </div>
          <div className="h-[30px] border-y border-[#d4d4d4] bg-white" />
          <div className="flex-1" />
          <div className="flex h-[16px] items-center justify-center bg-[#f1f1f1]">
            <div className="h-0 w-0 border-x-[5px] border-t-[6px] border-x-transparent border-t-[#555]" />
          </div>
        </div>
      </div>
      <div className="flex flex-1 items-center pl-[3px] pr-[3px]">
        <div className="relative flex h-[25px] w-[133px] items-center gap-[3px] rounded-[3px] border border-[#bcbcbc] bg-[#f6f6f6] pl-[3px] text-[12px] text-[#222]">
          <Icon k="table" size={17} />
          <span>Show All Features</span>
          <div className="absolute bottom-[4px] right-[3px] h-0 w-0 border-x-[3.500px] border-t-[4px] border-x-transparent border-t-[#555]" />
        </div>
        <div className="ml-auto flex items-center gap-[3px]">
          <div className="flex h-[24px] w-[16px] flex-col justify-center gap-[2px]">
            <div className="h-[7px] w-[9px] rounded-[1px] border border-[#7eaad2]" />
            <div className="h-[7px] w-[9px] rounded-[1px] border border-[#7eaad2]" />
          </div>
          <div className="flex h-[25px] w-[26px] items-center justify-center rounded-[3px] border border-[#b6b6b6] bg-[#d2d2d2]">
            <Icon k="table" size={19} />
          </div>
        </div>
      </div>
    </div>
  );
}

function Spin({ value, className }: { value: string; className: string }) {
  return (
    <div className={`flex h-[25px] shrink-0 items-center rounded-[3px] border border-[#bdbdbd] bg-white pl-[4px] text-[13px] text-[#333] ${className}`}>
      <span>{value}</span>
      <div className="ml-auto flex h-full w-[16px] flex-col items-center justify-center gap-[3px] border-l border-[#bdbdbd] bg-[#f2f2f2]">
        <div className="h-0 w-0 border-x-[4px] border-b-[5px] border-x-transparent border-b-[#444]" />
        <div className="h-0 w-0 border-x-[4px] border-t-[5px] border-x-transparent border-t-[#444]" />
      </div>
    </div>
  );
}

function StatusBar() {
  return (
    <div className="flex h-[34px] shrink-0 items-center border-t border-[#d4d4d4] bg-[#ececec] text-[13px] text-[#333]">
      <div className="ml-[7px] flex h-[25px] w-[237px] shrink-0 items-center gap-[7px] rounded-[2px] border border-[#bdbdbd] bg-white pl-[9px] text-[15px] text-[#7a7a7a]">
        <Search size={15} strokeWidth={1.5} />
        <span className="font-['Liberation_Sans','DejaVu_Sans',sans-serif]">Type to locate (⌘K)</span>
      </div>
      <span className="ml-[34px] w-[50px] shrink-0">oordinat</span>
      <div className="flex h-[25px] w-[125px] shrink-0 items-center justify-center rounded-[2px] border border-[#bdbdbd] bg-white text-[14px]">548630,5065486</div>
      <svg viewBox="0 0 20 24" width="19" height="23" className="ml-[5px] shrink-0">
        <ellipse cx="7" cy="9" rx="4.500" ry="8" transform="rotate(-30 7 9)" fill="#222" />
        <path d="M3 5l7 8M7 3l5 7" stroke="#fff" strokeWidth=".9" />
        <circle cx="12" cy="17" r="4.800" fill="#eee" stroke="#222" strokeWidth="1.700" />
        <circle cx="12" cy="17" r="1.600" fill="#222" />
        <path d="M15 5l3-3M16 8l2-1" stroke="#555" />
      </svg>
      <span className="ml-[13px] w-[19px] shrink-0">cal</span>
      <div className="flex h-[25px] w-[103px] shrink-0 items-center rounded-[3px] border border-[#bdbdbd] bg-white pl-[4px] text-[13px]">
        <span>1:43135</span>
        <div className="ml-auto flex h-full w-[21px] items-center justify-center border-l border-[#bdbdbd] bg-[#f2f2f2]">
          <div className="h-0 w-0 border-x-[5px] border-t-[6px] border-x-transparent border-t-[#555]" />
        </div>
      </div>
      <svg viewBox="0 0 16 20" width="16" height="20" className="ml-[12px] shrink-0">
        <path d="M4 9V6a4 4 0 0 1 8 0v3" fill="none" stroke="#777" strokeWidth="1.800" />
        <rect x="1" y="9" width="14" height="10" rx="1.500" fill="#6a6a6a" />
      </svg>
      <span className="ml-[7px] w-[42px] shrink-0">lagnifie</span>
      <Spin value="100%" className="w-[103px]" />
      <span className="ml-[10px] w-[42px] shrink-0">otatic</span>
      <Spin value="0.0 °" className="w-[103px]" />
      <div className="ml-[7px]"><Box checked /></div>
      <span className="ml-[5px] text-[12.500px]">Render</span>
      <Globe size={17} strokeWidth={1.3} className="ml-[19px] shrink-0 text-[#555]" />
      <span className="ml-[2px] text-[12.500px]">EPSG:26912</span>
      <svg viewBox="0 0 20 20" width="19" height="19" className="ml-[26px] shrink-0">
        <path d="M10 1c5 0 9 3.500 9 8s-4 8-9 8l-1 2.500-2-3.200C3.500 15 1 12.500 1 9c0-4.500 4-8 9-8z" fill="#555" />
        <circle cx="6" cy="9" r="1.300" fill="#fff" />
        <circle cx="10" cy="9" r="1.300" fill="#fff" />
        <circle cx="14" cy="9" r="1.300" fill="#fff" />
      </svg>
    </div>
  );
}

export default function App() {
  return (
    <div className="relative flex h-[933px] w-[1200px] flex-col overflow-hidden bg-[#ececec] font-['Liberation_Sans',sans-serif]">
      <div className="relative flex h-[28px] shrink-0 items-center justify-center border-b border-[#dcdcdc] bg-[#e6e6e6] pl-[3px] text-[15px] font-bold text-[#a9a9a9]">
        <div className="absolute left-[11px] top-[5px] flex gap-[8px]">
          <div className="h-[14px] w-[14px] rounded-full border border-[#c4c4c4] bg-[#d2d2d2]" />
          <div className="h-[14px] w-[14px] rounded-full border border-[#c4c4c4] bg-[#d2d2d2]" />
          <div className="h-[14px] w-[14px] rounded-full border border-[#c4c4c4] bg-[#d2d2d2]" />
        </div>
        *Untitled Project — QGIS
      </div>

      <div className="flex h-[41px] shrink-0 items-center border-b-2 border-[#d4d4d4] bg-[#f1f1f1] pt-[1px]">
        <Grip className="w-[16px]" />
        <T k="newDoc" />
        <T k="open" />
        <T k="save" />
        <T k="newLayout" />
        <T k="layoutMgr" />
        <T k="style" />
        <Grip className="w-[19px]" />
        <div className="flex w-[36.600px] shrink-0 justify-center">
          <Hand size={28} strokeWidth={1.4} fill="#fff" className="text-black" />
        </div>
        <T k="pan" />
        <T k="zoomIn" active />
        <T k="zoomOut" />
        <T k="zoomFull" />
        <T k="zoomSel" />
        <T k="zoomLayer" />
        <T k="zoom11" dim />
        <T k="zoomLast" />
        <T k="zoomNext" />
        <T k="newMap" />
        <T k="map3d" />
        <T k="bookmarkNew" />
        <T k="bookmarks" />
        <T k="clock" />
        <T k="refresh" />
        <Grip className="w-[17.400px]" />
        <T k="select" />
        <Dd />
        <T k="attrSelect" />
        <Dd />
        <T k="deselect" />
        <Dd />
        <T k="selectLoc" />
        <Dd />
        <Grip className="w-[15.700px]" />
        <T k="identify" />
        <T k="stats" />
        <T k="gearBlue" />
        <span className="pl-[1px] text-[15px] leading-none text-[#444]">»</span>
      </div>

      <div className="flex h-[44px] shrink-0 items-center border-b-2 border-[#d4d4d4] bg-[#f1f1f1] pt-[2px]">
        <Grip className="w-[16px]" />
        <T k="pencils" />
        <T k="pencil" />
        <T k="saveEdit" dim />
        <T k="poly" dim />
        <Dd />
        <T k="pointsBadge" dim />
        <div className="w-[2.700px] shrink-0" />
        <T k="toolX" dim />
        <Dd className="w-[11px]" />
        <T k="tableEdit" dim />
        <T k="trash" dim />
        <T k="scissors" dim />
        <T k="copy" dim />
        <T k="paste" dim />
        <T k="undo" dim />
        <T k="redo" dim />
        <Grip className="w-[18px]" />
        <T k="node1" dim />
        <Dd />
        <T k="ring" dim />
        <Dd />
        <T k="eye" dim />
        <Dd />
        <T k="rectNode" dim />
        <Dd />
        <T k="polyNode" dim />
        <Dd />
        <Grip className="w-[14.700px]" />
        <T k="plugin" />
        <div className="flex w-[36.600px] shrink-0 justify-center">
          <Settings size={25} strokeWidth={2} className="text-black" />
        </div>
        <div className="flex w-[36.600px] shrink-0 justify-center">
          <div className="flex h-[20px] w-[20px] items-center justify-center rounded-[3px] border-2 border-[#b0b0b0]">
            <Plus size={13} strokeWidth={2} className="text-[#999]" />
          </div>
        </div>
        <div className="flex w-[36.600px] shrink-0 justify-center">
          <RefreshCw size={21} strokeWidth={2} className="text-[#aaa]" />
        </div>
      </div>

      <div className="flex h-[44px] shrink-0 items-center border-b-2 border-[#d4d4d4] bg-[#f1f1f1] pt-[2px]">
        <Grip className="w-[16px]" />
        <T k="ruler" dim />
        <T k="pointsMove" dim />
        <Dd />
        <T k="shapeRot" dim />
        <T k="shapeArrow" dim />
        <T k="hexArrow" dim />
        <T k="shapeHole" dim />
        <T k="shapePart" dim />
        <T k="shapeHole" dim />
        <T k="shapeHoleDel" dim />
        <T k="shapePartDel" dim />
        <T k="shapeReshape" dim />
        <T k="shapeOffset" dim />
        <T k="vertex" dim />
        <T k="snap" dim />
        <T k="cutShape" dim />
        <T k="cutShape" dim />
        <T k="merge" dim />
        <T k="lines3" dim />
        <T k="rotateFlag" dim />
        <Dd />
      </div>

      <div className="flex min-h-0 flex-1 pl-[3px]">
        <LayersPanel />
        <div className="flex w-[7px] shrink-0 items-center justify-center pt-[50px]">
          <div className="h-[24px] w-[3px] border-x border-dotted border-[#c4c4c4]" />
        </div>
        <div className="flex-1 border-l border-[#c9c9c9] bg-white pl-[18px] pr-[15px] pt-[103px]">
          <div className="h-[537px] rounded-[3px] border border-[#555] bg-black" />
        </div>
      </div>

      <StatusBar />

      <AttributeWindow />

      <div className="absolute left-[7px] top-[226px] h-[37px] w-[296px] border-[5px] border-[#fb2106]" />
      <div className="absolute left-[1007px] top-[547px] h-[310px] w-[116px] border-[6px] border-[#fb2106]" />
    </div>
  );
}
